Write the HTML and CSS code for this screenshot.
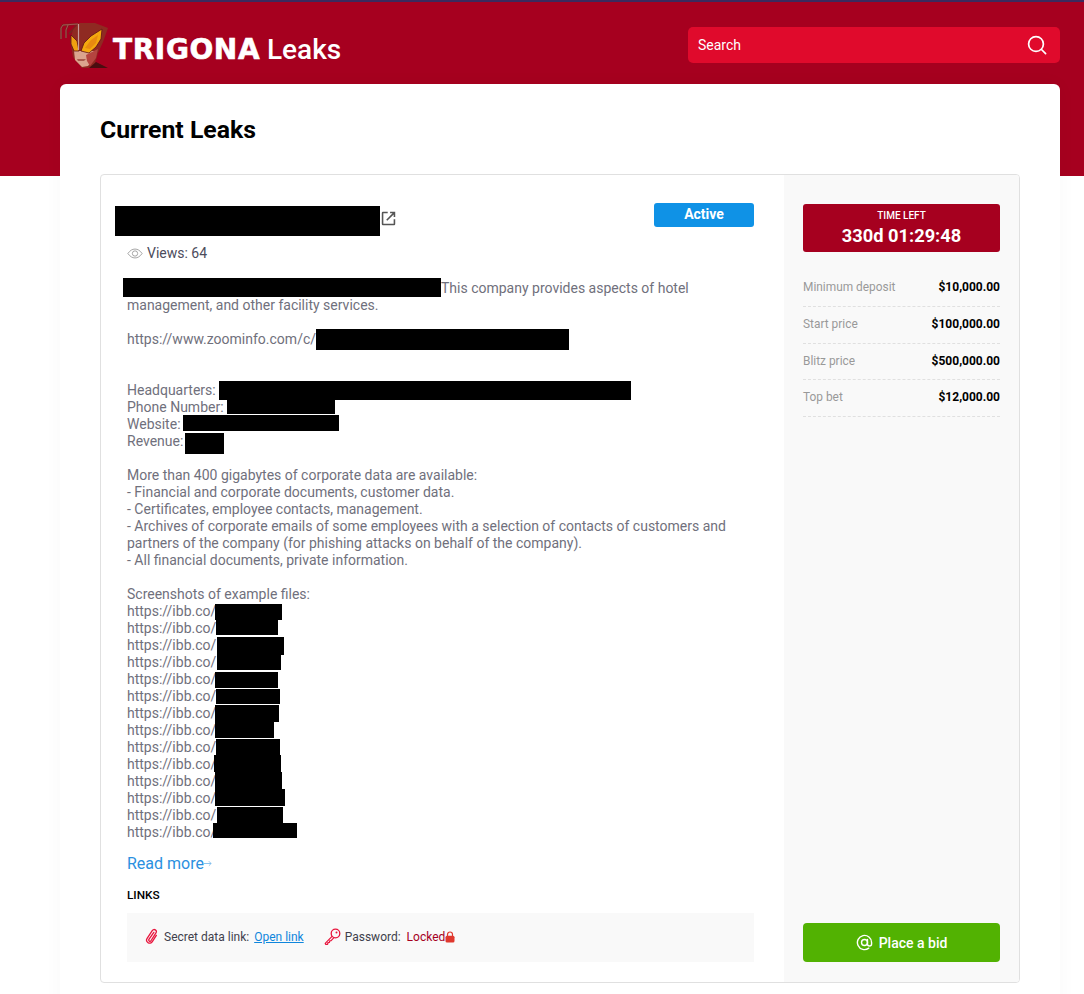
FILE: index.html
```html
<!DOCTYPE html>
<html lang="en">
<head>
<meta charset="utf-8">
<title>TRIGONA Leaks</title>
<link rel="stylesheet" href="styles.css">
</head>
<body>
<header class="band">
  <div class="top">
    <a class="brand">
      <svg class="mask" viewBox="0 0 48 47" width="48" height="47">
        <path d="M18 2 3 3 1 6 1 17M8 3 6 8 6 16M18 2 9 12" fill="none" stroke="#7a2220" stroke-width="2"/>
        <path d="M18 2 3 3 1 6 1 17M8 3 6 8 6 16" fill="none" stroke="#c98a80" stroke-width=".5"/>
        <path d="M19 1 35 1 48 6 43 20 38 31 35 41 48 46 22 46 13 35 10 18 13 8Z" fill="#8f2a22"/>
        <path d="M14 29 34 29 33 38 28 44 22 45 15 38Z" fill="#dba48e"/>
        <path d="M26 33 38 27 36 36 30 44 27 39Z" fill="#b5443f"/>
        <path d="M17 37 26 37 24 39 18 39Z" fill="#a85a4c"/>
        <path d="M11 13 17 19 19 29 14 29 11 22Z" fill="#f0a010" stroke="#5e1214" stroke-width=".8"/>
        <path d="M21 29 24 21 31 14 42 7 41 17 36 25 29 31Z" fill="#f4a80e" stroke="#5e1214" stroke-width=".8"/>
        <path d="M25 26 31 18 38 13 36 21 30 27Z" fill="#e88a10"/>
        <path d="M18.500 2V28" stroke="#c99c9c" stroke-width="1.200"/>
        <path d="M29 46 36 40 48 46Z" fill="#4a0d10"/>
      </svg>
      <span class="wordmark">TRIGONA</span>
      <span class="leaks">Leaks</span>
    </a>
    <div class="search">
      <span class="search-label">Search</span>
      <svg viewBox="0 0 20 20" width="20" height="20"><circle cx="9" cy="9" r="7.400" fill="none" stroke="#fff" stroke-width="1.700"/><path d="M14.500 14.500 18.600 18.600" stroke="#fff" stroke-width="1.700" stroke-linecap="round"/></svg>
    </div>
  </div>
</header>

<main class="card">
  <h1 class="page-title">Current Leaks</h1>
  <section class="leak">
    <div class="content">
      <div class="title-row">
        <div class="title-left">
          <span class="r r-title"></span>
          <svg class="ext" viewBox="0 0 24 24" width="19" height="19"><path d="M5 3.500h6v2H5.500v13h13V13h2v6a1.500 1.500 0 0 1-1.500 1.500H5A1.500 1.500 0 0 1 3.500 19V5A1.500 1.500 0 0 1 5 3.500ZM14 3.500h6.500V10h-2V6.900l-8 8-1.400-1.400 8-8H14Z" fill="#555"/></svg>
        </div>
        <span class="badge">Active</span>
      </div>
      <div class="views">
        <svg viewBox="0 0 18 12" width="16" height="11"><path d="M1 6C3.500 2.500 6 1 9 1s5.500 1.500 8 5c-2.500 3.500-5 5-8 5S3.500 9.500 1 6Z" fill="none" stroke="#8f8f8f" stroke-width=".9"/><circle cx="9" cy="6" r="3" fill="none" stroke="#8f8f8f" stroke-width=".9"/></svg>
        <span>Views: 64</span>
      </div>
      <p class="desc"><span class="r r-intro"></span>This company provides aspects of hotel management, and other facility services.<br>
<br>
https://www.zoominfo.com/c/<span class="r r-zoom"></span><br>
<br>
<br>
Headquarters: <span class="r r-hq"></span><br>
Phone Number: <span class="r r-phone"></span><br>
Website: <span class="r r-web"></span><br>
Revenue: <span class="r r-rev"></span><br>
<br>
More than 400 gigabytes of corporate data are available:<br>
- Financial and corporate documents, customer data.<br>
- Certificates, employee contacts, management.<br>
- Archives of corporate emails of some employees with a selection of contacts of customers and partners of the company (for phishing attacks on behalf of the company).<br>
- All financial documents, private information.<br>
<br>
Screenshots of example files:<br>
https://ibb.co/<span class="r i1"></span><br>
https://ibb.co/<span class="r i2"></span><br>
https://ibb.co/<span class="r i3"></span><br>
https://ibb.co/<span class="r i4"></span><br>
https://ibb.co/<span class="r i5"></span><br>
https://ibb.co/<span class="r i6"></span><br>
https://ibb.co/<span class="r i7"></span><br>
https://ibb.co/<span class="r i8"></span><br>
https://ibb.co/<span class="r i9"></span><br>
https://ibb.co/<span class="r i10"></span><br>
https://ibb.co/<span class="r i11"></span><br>
https://ibb.co/<span class="r i12"></span><br>
https://ibb.co/<span class="r i13"></span><br>
https://ibb.co/<span class="r i14"></span></p>
      <a class="more">Read more<svg viewBox="0 0 9 7" width="8" height="7"><path d="M0 3.500h8M5.500 1 8 3.500 5.500 6" fill="none" stroke="#7dbcec" stroke-width="1"/></svg></a>
      <div class="links-head">LINKS</div>
      <div class="links">
        <svg class="l-icon" viewBox="0 0 14 18" width="13" height="17"><path d="M9.500 4.500 4.200 12.200c-.9 1.400 1.300 2.800 2.200 1.400l5.400-8.400c1.700-2.700-2.300-5.300-4-2.600L2.300 11c-2.400 3.800 3.200 7.400 5.600 3.600l4.300-6.800" fill="none" stroke="#e8143c" stroke-width="1.400" stroke-linecap="round"/></svg>
        <span class="l-text">Secret data link:</span>
        <a class="open">Open link</a>
        <svg class="l-icon key" viewBox="0 0 17 17" width="17" height="17"><circle cx="11.500" cy="5.500" r="4.300" fill="none" stroke="#e8143c" stroke-width="1.300"/><circle cx="12.500" cy="4.500" r="1" fill="#e8143c"/><path d="M8.300 8.200 1.200 15.300l.4 1 2 0 .3-1.600 1.500-.3.300-1.500 1.400-.3 2.900-3" fill="none" stroke="#e8143c" stroke-width="1.200" stroke-linejoin="round"/></svg>
        <span class="l-text">Password:</span>
        <span class="locked">Locked<svg viewBox="0 0 10 12" width="10" height="12"><path d="M2.500 5V3.500a2.500 2.500 0 0 1 5 0V5" fill="none" stroke="#e0382e" stroke-width="1.200"/><rect x="0.500" y="4.800" width="9" height="6.700" rx="1.500" fill="#e0382e"/></svg></span>
      </div>
    </div>
    <aside class="side">
      <div class="timer">
        <div class="timer-label">TIME LEFT</div>
        <div class="timer-value">330d 01:29:48</div>
      </div>
      <dl class="stats">
        <div class="stat"><dt>Minimum deposit</dt><dd>$10,000.00</dd></div>
        <div class="stat"><dt>Start price</dt><dd>$100,000.00</dd></div>
        <div class="stat"><dt>Blitz price</dt><dd>$500,000.00</dd></div>
        <div class="stat"><dt>Top bet</dt><dd>$12,000.00</dd></div>
      </dl>
      <a class="bid">
        <svg viewBox="0 0 24 24" width="17" height="17"><circle cx="12" cy="12" r="4.200" fill="none" stroke="#fff" stroke-width="2"/><path d="M16.200 7.800V14a2.900 2.900 0 0 0 5.800 0v-2a10 10 0 1 0-4 8" fill="none" stroke="#fff" stroke-width="2" stroke-linecap="round"/></svg>
        <span>Place a bid</span>
      </a>
    </aside>
  </section>
</main>
</body>
</html>
```

FILE: styles.css
```css
* { box-sizing: border-box; }
html, body { margin: 0; padding: 0; }
body { background: #fff; font-family: Roboto, "Liberation Sans", sans-serif; color: #70707c; }

.band { height: 176px; background: #a6001f; border-top: 2px solid #3b2a5e; }
.top { width: 1000px; margin-left: 60px; height: 82px; display: flex; justify-content: space-between; align-items: flex-start; }
.brand { display: flex; align-items: flex-start; padding-top: 20px; }
.mask { flex: none; }
.wordmark { margin: 12px 0 0 5px; width: 147px; font: 700 28px/32px "DejaVu Sans", sans-serif; color: #fff; white-space: nowrap; letter-spacing: .6px; -webkit-text-stroke: .6px #fff; }
.leaks { margin: 12px 0 0 7px; font-weight: 500; font-size: 28px; line-height: 32px; color: #fff; }

.search { margin-top: 25px; width: 372px; height: 36px; background: #e00a2c; border-radius: 5px; display: flex; align-items: center; justify-content: space-between; padding: 0 13px 0 10px; }
.search-label { color: #fff; font-size: 14px; font-weight: 400; }

.card { position: relative; width: 1000px; margin: -92px 0 0 60px; padding: 0 40px 40px; background: #fff; border-radius: 6px 6px 0 0; box-shadow: 0 0 20px rgba(0,0,0,.03); }
.page-title { margin: 0; height: 91px; padding-top: 31px; font-size: 24.8px; line-height: 30px; font-weight: 700; color: #000; }

.leak { display: grid; grid-template-columns: 683px 235px; width: 920px; height: 809px; margin-top: -1px; border: 1px solid #e0e0e0; border-radius: 4px; }
.content { padding: 28px 30px 0 26px; min-width: 0; }

.r { display: inline-block; position: relative; vertical-align: top; background: #000; width: var(--w); height: var(--h); top: var(--t); margin-left: var(--l); margin-bottom: calc(var(--h) * -1); }

.title-row { display: flex; justify-content: space-between; align-items: flex-start; height: 40px; }
.title-left { display: flex; align-items: flex-start; }
.r-title { --w: 265px; --h: 30px; --t: 3px; --l: -12px; }
.ext { margin: 6px 0 0 -1px; }
.badge { width: 100px; height: 24px; background: #0f92e6; border-radius: 3px; color: #fff; font-size: 14px; font-weight: 700; line-height: 23px; text-align: center; }

.views { display: flex; align-items: center; gap: 4px; height: 20px; font-size: 14px; color: #4c4c5c; }
.desc { margin: 17px 0 0; font-size: 14px; line-height: 17px; }

.r-intro { --w: 318px; --h: 19px; --t: -2px; --l: -4px; }
.r-zoom { --w: 253px; --h: 21px; --t: -2px; --l: 0px; }
.r-hq { --w: 412px; --h: 19px; --t: -1px; --l: 0px; }
.r-phone { --w: 108px; --h: 14px; --t: 1px; --l: 0px; }
.r-web { --w: 156px; --h: 16px; --t: -1px; --l: -1px; }
.r-rev { --w: 39px; --h: 21px; --t: 0px; --l: -2px; }
.i1 { --w: 67px; --h: 16px; --t: 1px; --l: -1px; }
.i2 { --w: 62px; --h: 15px; --t: 0px; --l: 0px; }
.i3 { --w: 67px; --h: 18px; --t: 0px; --l: 1px; }
.i4 { --w: 64px; --h: 15px; --t: 1px; --l: 1px; }
.i5 { --w: 63px; --h: 16px; --t: 1px; --l: -1px; }
.i6 { --w: 64px; --h: 15px; --t: 1px; --l: 0px; }
.i7 { --w: 64px; --h: 17px; --t: 0px; --l: -1px; }
.i8 { --w: 59px; --h: 16px; --t: 0px; --l: -1px; }
.i9 { --w: 64px; --h: 17px; --t: 0px; --l: 0px; }
.i10 { --w: 67px; --h: 17px; --t: -1px; --l: -2px; }
.i11 { --w: 67px; --h: 17px; --t: -1px; --l: -1px; }
.i12 { --w: 70px; --h: 17px; --t: -1px; --l: -1px; }
.i13 { --w: 66px; --h: 16px; --t: 0px; --l: 1px; }
.i14 { --w: 84px; --h: 15px; --t: -1px; --l: -3px; }

.more { display: flex; align-items: center; margin-top: 12px; height: 20px; font-size: 16px; color: #2b90e0; }
.more svg { margin-top: 1px; }
.links-head { margin-top: 14px; height: 17px; font-size: 11.800px; line-height: 17px; font-weight: 500; color: #000; }
.links { display: flex; align-items: center; margin-top: 9px; height: 49px; padding: 0 0 2px 18px; background: #f9f9f9; font-size: 12px; color: #3f3f4c; }
.l-text { margin-left: 6px; }
.key { margin-left: 20px; }
.key + .l-text { margin-left: 4px; }
.open { margin-left: 5px; color: #0f86dc; text-decoration: underline; }
.locked { display: flex; align-items: center; margin-left: 6px; color: #a6001f; }

.side { background: #f9f9f9; padding: 29px 19px 20px; display: flex; flex-direction: column; border-radius: 0 3px 3px 0; }
.timer { height: 48px; background: #a6001f; border-radius: 3px; color: #fff; text-align: center; padding-top: 6px; }
.timer-label { font-size: 10px; line-height: 12px; font-weight: 500; }
.timer-value { font-size: 18.300px; line-height: 24px; font-weight: 700; margin-top: 2px; }
.stats { margin: 18.400px 0 0; }
.stat { display: flex; justify-content: space-between; align-items: center; height: 36.700px; padding-bottom: 2px; border-bottom: 1px dashed #e0e0e0; }
.stat dt { font-size: 11.900px; color: #999; }
.stat dd { margin: 0; font-size: 12px; font-weight: 700; color: #000; }
.bid { margin-top: auto; height: 39px; display: flex; align-items: center; justify-content: center; gap: 6px; background: #52b202; border-radius: 4px; color: #fff; font-size: 14px; font-weight: 500; }
```
